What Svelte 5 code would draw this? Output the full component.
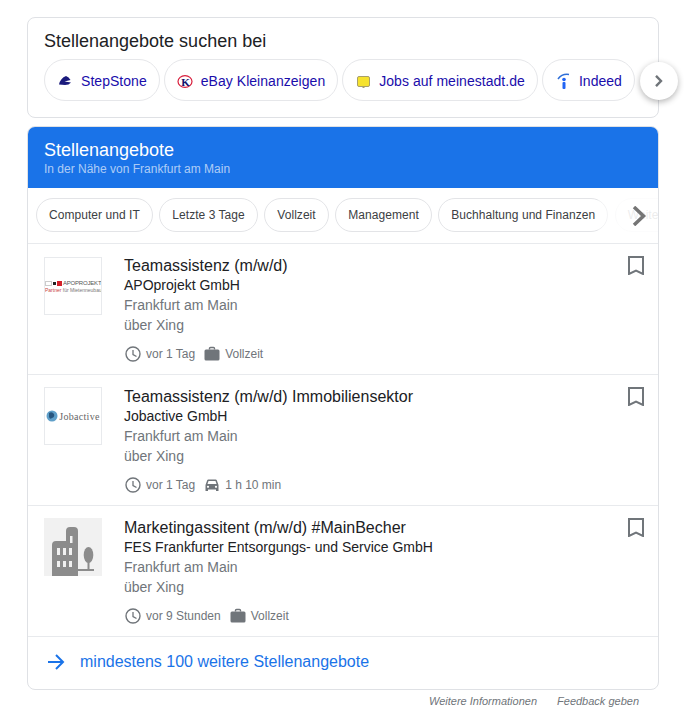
<script>
  const sites = [
    { name: 'StepStone', icon: 'stepstone' },
    { name: 'eBay Kleinanzeigen', icon: 'ebay' },
    { name: 'Jobs auf meinestadt.de', icon: 'stadt' },
    { name: 'Indeed', icon: 'indeed' }
  ];
  const filters = ['Computer und IT', 'Letzte 3 Tage', 'Vollzeit', 'Management', 'Buchhaltung und Finanzen', 'Weitere'];
  const jobs = [
    { title: 'Teamassistenz (m/w/d)', company: 'APOprojekt GmbH', logo: 'apo', age: 'vor 1 Tag', extra: 'Vollzeit', kind: 'bag' },
    { title: 'Teamassistenz (m/w/d) Immobiliensektor', company: 'Jobactive GmbH', logo: 'jobactive', age: 'vor 1 Tag', extra: '1 h 10 min', kind: 'car' },
    { title: 'Marketingassitent (m/w/d) #MainBecher', company: 'FES Frankfurter Entsorgungs- und Service GmbH', logo: 'building', age: 'vor 9 Stunden', extra: 'Vollzeit', kind: 'bag' }
  ];
</script>

<main class="page">
  <section class="card search">
    <h2>Stellenangebote suchen bei</h2>
    <div class="sites">
      {#each sites as site}
        <a class="site" href="#top">
          <svg class="site-icon" viewBox="0 0 16 16" width="16" height="16">
            {#if site.icon === 'stepstone'}
              <path d="M2 11.500 Q3.500 5 9 3 Q12 4 13.500 7 L7.500 8.500 L14 9.500 Q12 12 8 12 Z" fill="#1a1a7c" />
            {:else if site.icon === 'ebay'}
              <ellipse cx="8" cy="8.500" rx="7" ry="5.800" fill="#fff" stroke="#d81e3c" stroke-width="1.200" />
              <text class="k" x="8.500" y="12.500" text-anchor="middle">K</text>
            {:else if site.icon === 'stadt'}
              <rect x="2.500" y="3.500" width="12" height="10" rx="1.500" fill="#f6e22e" stroke="#a89f6a" />
              <rect x="7.500" y="13.500" width="2" height="1.500" fill="#a89f6a" />
            {:else}
              <path d="M3 6 Q7 0.500 14 1.500" fill="none" stroke="#2f6fd8" stroke-width="1.500" />
              <circle cx="9" cy="6.500" r="1.800" fill="#2164f4" />
              <rect x="7.500" y="9" width="3" height="7" rx="1" fill="#2164f4" />
            {/if}
          </svg>
          {site.name}
        </a>
      {/each}
    </div>
    <button class="next" aria-label="Weiter">
      <svg viewBox="0 0 12 12" width="12" height="12"><path d="M3 0.800 L8 6 L3 11.200" fill="none" stroke="#70757a" stroke-width="2.400" /></svg>
    </button>
  </section>

  <section class="card jobs">
    <header class="head">
      <h2>Stellenangebote</h2>
      <p>In der Nähe von Frankfurt am Main</p>
    </header>

    <div class="filters">
      {#each filters as filter}
        <span class="filter">{filter}</span>
      {/each}
      <div class="fade">
        <svg viewBox="0 0 16 20" width="16" height="20"><path d="M2 1 L11.500 10 L2 19" fill="none" stroke="#757575" stroke-width="3.500" /></svg>
      </div>
    </div>

    {#each jobs as job}
      <article class="job">
        <div class="logo" class:plain={job.logo === 'building'}>
          {#if job.logo === 'apo'}
            <div class="apo">
              <div class="apo-top"><i class="sq white"></i><i class="sq black"></i><i class="sq red"></i><span>APOPROJEKT</span></div>
              <div class="apo-sub"><b>Partner</b> für Mietenneubau</div>
            </div>
          {:else if job.logo === 'jobactive'}
            <div class="jobactive">
              <svg viewBox="0 0 12 12" width="12" height="12">
                <circle cx="6" cy="6" r="5.500" fill="#5f9fc9" />
                <path d="M3 3 Q6 1 8 4 Q9 7 6 8 Q4 10 3 7 Z" fill="#27567f" />
              </svg>
              <span>Jobactive</span>
            </div>
          {:else}
            <svg viewBox="0 0 58 58" width="58" height="58">
              <path d="M8 58 V27 Q8 23 12 23 H22 V13 Q22 9 26 9 H30 Q34 9 34 13 V58 Z" fill="#8c8c8c" />
              <g fill="#f1f1f1">
                <rect x="26" y="18" width="2.500" height="7" />
                <rect x="13" y="30" width="3" height="7" /><rect x="19" y="30" width="3" height="7" /><rect x="25" y="30" width="3" height="7" />
                <rect x="13" y="43" width="3" height="6" /><rect x="19" y="43" width="3" height="6" /><rect x="25" y="43" width="3" height="6" />
              </g>
              <ellipse cx="44.500" cy="37" rx="4.800" ry="8" fill="#8c8c8c" />
              <rect x="43.500" y="42" width="2" height="10" fill="#8c8c8c" />
              <rect x="34" y="51" width="16" height="2" fill="#8c8c8c" />
            </svg>
          {/if}
        </div>
        <div class="body">
          <h3>{job.title}</h3>
          <div class="company">{job.company}</div>
          <div class="muted">Frankfurt am Main</div>
          <div class="muted">über Xing</div>
          <div class="meta">
            <svg viewBox="0 0 16 16" width="16" height="16">
              <circle cx="8" cy="8" r="7" fill="none" stroke="#70757a" stroke-width="1.400" />
              <path d="M8 4 V8.500 L11.500 10.500" fill="none" stroke="#70757a" stroke-width="1.300" />
            </svg>
            <span class="meta-age">{job.age}</span>
            {#if job.kind === 'bag'}
              <svg viewBox="0 0 16 16" width="16" height="16">
                <path d="M5.500 3.500 V2.500 Q5.500 1.500 6.500 1.500 H9.500 Q10.500 1.500 10.500 2.500 V3.500" fill="none" stroke="#70757a" stroke-width="1.400" />
                <rect x="0.500" y="3.500" width="15" height="11" rx="1.500" fill="#70757a" />
              </svg>
            {:else}
              <svg viewBox="0 0 16 16" width="16" height="16">
                <path d="M1.500 14 V8 L3.200 3.200 Q3.500 2.500 4.300 2.500 H11.700 Q12.500 2.500 12.800 3.200 L14.500 8 V14 H12 V12.500 H4 V14 Z" fill="#70757a" />
                <path d="M3.500 7 L4.500 4 H11.500 L12.500 7 Z" fill="#fff" />
                <circle cx="4" cy="9.800" r="1.100" fill="#fff" /><circle cx="12" cy="9.800" r="1.100" fill="#fff" />
              </svg>
            {/if}
            <span>{job.extra}</span>
          </div>
        </div>
        <svg class="bookmark" viewBox="0 0 16 19" width="16" height="19">
          <path d="M1 1 H15 V18 L8 14.500 L1 18 Z" fill="none" stroke="#70757a" stroke-width="2" />
        </svg>
      </article>
    {/each}

    <a class="more" href="#top">
      <svg viewBox="0 0 18 16" width="18" height="16">
        <path d="M1 8 H16 M9 1 L16 8 L9 15" fill="none" stroke="#1a73e8" stroke-width="2" />
      </svg>
      mindestens 100 weitere Stellenangebote
    </a>
  </section>

  <footer class="foot">
    <span>Weitere Informationen</span>
    <span>Feedback geben</span>
  </footer>
</main>

<style>
  :global(body) {
    margin: 0;
    background: #fff;
    font-family: "Liberation Sans", Arial, sans-serif;
  }

  .page {
    width: 632px;
    margin-left: 27px;
    padding-top: 17px;
  }

  .card {
    position: relative;
    box-sizing: border-box;
    border: 1px solid #dfe1e5;
    border-radius: 8px;
    background: #fff;
  }

  .search {
    height: 101px;
    padding: 13px 16px 0;
    margin-bottom: 8px;
  }

  .search h2 {
    margin: 0 0 7px;
    font-size: 18px;
    font-weight: 400;
    line-height: 21px;
    color: #202124;
  }

  .sites {
    display: flex;
    gap: 4px;
  }

  .site {
    display: flex;
    align-items: center;
    gap: 8px;
    box-sizing: border-box;
    height: 42px;
    padding: 2px 12px 0;
    border: 1px solid #e6e7ea;
    border-radius: 21px;
    font-size: 14px;
    letter-spacing: 0.04px;
    color: #1a0dab;
    text-decoration: none;
    white-space: nowrap;
  }

  .site-icon {
    flex: none;
  }

  .k {
    font-family: "Liberation Serif", serif;
    font-size: 11px;
    font-weight: 700;
    fill: #12126e;
  }

  .next {
    position: absolute;
    top: 44px;
    right: -20px;
    display: flex;
    align-items: center;
    justify-content: center;
    width: 38px;
    height: 38px;
    padding: 0;
    border: 0;
    border-radius: 50%;
    background: #fff;
    box-shadow: 0 2px 6px rgba(0, 0, 0, 0.3);
  }

  .jobs {
    height: 564px;
    overflow: hidden;
  }

  .head {
    height: 61px;
    box-sizing: border-box;
    padding: 13px 16px 0;
    background: #1a73e8;
    color: #fff;
  }

  .head h2 {
    margin: 0;
    font-size: 18px;
    font-weight: 400;
    line-height: 21px;
  }

  .head p {
    margin: 0;
    font-size: 12px;
    line-height: 16px;
    color: rgba(255, 255, 255, 0.65);
  }

  .filters {
    position: relative;
    display: flex;
    align-items: center;
    gap: 6.5px;
    height: 56px;
    box-sizing: border-box;
    padding: 0 8px 2px;
    border-bottom: 1px solid #e8eaed;
    overflow: hidden;
  }

  .filter {
    flex: none;
    display: flex;
    align-items: center;
    box-sizing: border-box;
    height: 34px;
    padding: 0 12px;
    border: 1px solid #e3e4e7;
    border-radius: 17px;
    font-size: 12px;
    letter-spacing: 0.05px;
    color: #3c4043;
  }

  .fade {
    position: absolute;
    top: 0;
    right: 0;
    bottom: 0;
    width: 60px;
    display: flex;
    align-items: center;
    justify-content: flex-end;
    padding-right: 10px;
    box-sizing: border-box;
    background: linear-gradient(to right, rgba(255, 255, 255, 0.4), rgba(255, 255, 255, 0.9) 35%);
  }

  .job {
    display: flex;
    height: 131px;
    box-sizing: border-box;
    padding: 12px 14px 0 16px;
    border-bottom: 1px solid #e8eaed;
  }

  .logo {
    flex: none;
    display: flex;
    align-items: center;
    justify-content: center;
    box-sizing: border-box;
    width: 58px;
    height: 58px;
    border: 1px solid #e8eaed;
    overflow: hidden;
  }

  .filters + .job .logo {
    margin-top: 1px;
  }

  .logo.plain {
    border: 0;
    background: #f1f1f1;
  }

  .apo {
    width: 56px;
  }

  .apo-top {
    display: flex;
    align-items: center;
    gap: 1px;
    font-size: 6px;
    color: #555;
    line-height: 7px;
    letter-spacing: -0.2px;
  }

  .sq {
    display: block;
    width: 5px;
    height: 5px;
    flex: none;
  }

  .sq.white {
    width: 7px;
    border: 1px solid #ccc;
    box-sizing: border-box;
  }

  .sq.black {
    width: 3px;
    height: 3px;
    background: #222;
  }

  .sq.red {
    background: #d3202a;
  }

  .apo-sub {
    font-size: 5px;
    line-height: 6px;
    color: #777;
    white-space: nowrap;
  }

  .apo-sub b {
    font-weight: 400;
    color: #c8453f;
  }

  .jobactive {
    display: flex;
    align-items: center;
    gap: 1px;
    font-family: "Liberation Serif", serif;
    font-size: 10px;
    letter-spacing: 0.3px;
    color: #666;
  }

  .body {
    flex: 1;
    min-width: 0;
    margin-left: 22px;
  }

  h3 {
    margin: 0 0 -1px;
    font-size: 16px;
    font-weight: 400;
    line-height: 20px;
    color: #202124;
  }

  .company {
    font-size: 14px;
    line-height: 20px;
    color: #202124;
  }

  .muted {
    font-size: 14px;
    line-height: 20px;
    color: #70757a;
  }

  .meta {
    display: flex;
    align-items: center;
    gap: 5px;
    height: 16px;
    margin-top: 11px;
    padding-left: 1px;
    font-size: 12px;
    color: #70757a;
  }

  .meta-age {
    margin-right: 4px;
  }

  .bookmark {
    flex: none;
  }

  .more {
    display: flex;
    align-items: center;
    gap: 15px;
    height: 50px;
    padding-left: 19px;
    font-size: 16px;
    color: #1a73e8;
    text-decoration: none;
  }

  .foot {
    display: flex;
    justify-content: flex-end;
    gap: 20px;
    padding: 4px 20px 0 0;
    font-size: 11px;
    line-height: 14px;
    font-style: italic;
    color: #70757a;
  }
</style>
